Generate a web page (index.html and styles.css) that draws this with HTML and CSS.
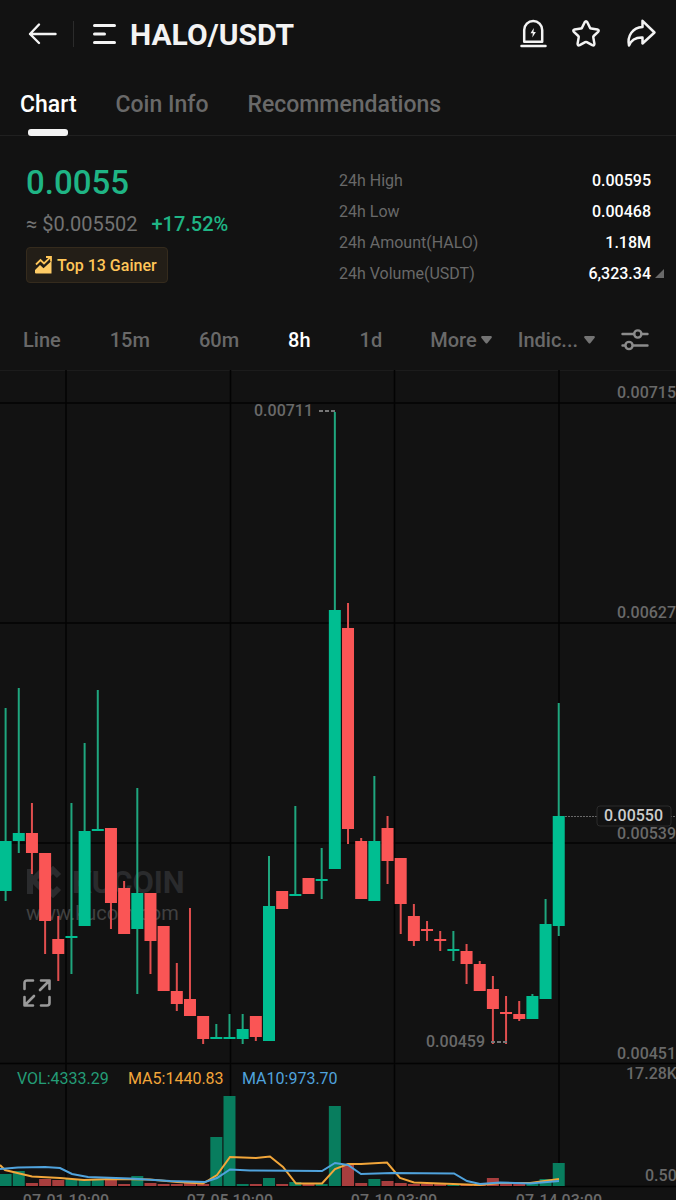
FILE: index.html
```html
<!DOCTYPE html>
<html lang="en">
<head>
<meta charset="utf-8">
<meta name="viewport" content="width=device-width, initial-scale=1">
<title>HALO/USDT</title>
<link rel="stylesheet" href="styles.css">
</head>
<body>
<div class="app">
  <header class="header">
    <button class="icon-button" aria-label="Back">
      <svg width="30" height="28" viewBox="0 0 30 28" fill="none" stroke="#f3f3f3" stroke-width="2.400" stroke-linecap="round" stroke-linejoin="round"><path d="M27.500 14H2M11 4.500 2 14l9 9"/></svg>
    </button>
    <span class="divider"></span>
    <button class="pair">
      <svg width="25" height="24" viewBox="0 0 25 24" stroke="#f3f3f3" stroke-width="3" stroke-linecap="round"><path d="M2.500 3.500h20M2.500 12h10M2.500 20.500h20"/></svg>
      <span class="pair-name">HALO/USDT</span>
    </button>
    <div class="actions">
      <button class="icon-button" aria-label="Price alert">
        <svg width="28" height="30" viewBox="0 0 28 30" fill="none" stroke="#f3f3f3" stroke-width="2.500" stroke-linejoin="round" stroke-linecap="round"><path d="M5.200 22.800V11a9 9 0 0 1 18 0v11.800z"/><path d="M2.500 27h24"/><path d="M14.800 9 11.500 14.300h2.300l-.5 4.200 3.600-5.500h-2.400z" fill="#f3f3f3" stroke="none"/></svg>
      </button>
      <button class="icon-button" aria-label="Add to favorites">
        <svg width="30" height="30" viewBox="0 0 30 30" fill="none" stroke="#f3f3f3" stroke-width="2.500" stroke-linejoin="round"><path d="M13.700 3.200Q15 1.100 16.300 3.200L19 8.800Q19.400 9.500 20.200 9.600L26.400 10.500Q28.600 11.100 27.100 12.800L22.700 17Q22.100 17.600 22.300 18.400L23.400 24.600Q23.500 27 21.300 26.200L15.800 23.200Q15 22.800 14.200 23.200L8.700 26.200Q6.500 27 6.600 24.600L7.700 18.400Q7.900 17.600 7.300 17L2.900 12.800Q1.400 11.100 3.600 10.500L9.800 9.600Q10.600 9.500 11 8.800Z"/></svg>
      </button>
      <button class="icon-button" aria-label="Share">
        <svg width="32" height="30" viewBox="0 0 32 30" fill="none" stroke="#f3f3f3" stroke-width="2.500" stroke-linejoin="round"><path d="M17.500 1.800 29.500 13.500 17.500 24.500V18.500C10 18.200 6 21.500 4 26.500 2 17 7.500 8.500 17.500 8Z"/></svg>
      </button>
    </div>
  </header>

  <nav class="tabs">
    <a class="tab tab-active" href="#chart">Chart</a>
    <a class="tab" href="#coin-info">Coin Info</a>
    <a class="tab" href="#recommendations">Recommendations</a>
  </nav>

  <section class="summary">
    <div class="quote">
      <div class="price">0.0055</div>
      <div class="quote-line"><span class="fiat">≈ $0.005502</span><span class="change">+17.52%</span></div>
      <a class="badge" href="#gainers">
        <svg width="18" height="18" viewBox="0 0 18 18"><path d="M0 16.500V14l5-5 3.500 3.200L16.500 5v12.500H1Q0 17.500 0 16.500z" fill="#ffcc66"/><path d="m1 8.500 4.500-4.500 3.500 3.500L15 1.700M11 1h5v4.500" fill="none" stroke="#ffc659" stroke-width="1.800"/></svg>
        Top 13 Gainer
      </a>
    </div>
    <dl class="stats">
      <div class="stat"><dt>24h High</dt><dd>0.00595</dd></div>
      <div class="stat"><dt>24h Low</dt><dd>0.00468</dd></div>
      <div class="stat"><dt>24h Amount(HALO)</dt><dd>1.18M</dd></div>
      <div class="stat stat-more"><dt>24h Volume(USDT)</dt><dd>6,323.34</dd></div>
    </dl>
  </section>

  <div class="toolbar">
    <div class="intervals">
      <button class="option">Line</button>
      <button class="option">15m</button>
      <button class="option">60m</button>
      <button class="option option-active" aria-pressed="true">8h</button>
      <button class="option">1d</button>
    </div>
    <div class="menus">
      <button class="option" aria-haspopup="menu">More<svg width="11" height="8" viewBox="0 0 11 8"><path d="M1 0h9q1.500.5.5 2L6.500 7q-1 1-2 0L.5 2Q-.5.5 1 0z" fill="#737373"/></svg></button>
      <button class="option option-indicator" aria-haspopup="menu">Indic...<svg width="11" height="8" viewBox="0 0 11 8"><path d="M1 0h9q1.500.5.5 2L6.500 7q-1 1-2 0L.5 2Q-.5.5 1 0z" fill="#737373"/></svg></button>
      <button class="icon-button" aria-label="Chart settings">
        <svg width="28" height="24" viewBox="0 0 28 24" fill="none" stroke="#8c8c8c" stroke-width="2.400" stroke-linecap="round"><path d="M1.500 6H13M20.500 6h6M1.500 17.500H4M12 17.500h14.500"/><circle cx="16.800" cy="6" r="3.600"/><circle cx="8" cy="17.500" r="3.600"/></svg>
      </button>
    </div>
  </div>

  <main class="chart">
    <svg class="plot" viewBox="0 370 676 830" preserveAspectRatio="xMaxYMin slice" role="img" aria-label="HALO/USDT 8h candles">
      <path class="frame" d="M0 370.500H676"/>
      <path class="grid" d="M0 403H676M0 623H676M0 843H676M0 1063.500H676M0 1186.500H676M66 370V1186M230.500 370V1186M394.500 370V1186M559 370V1186"/>
      <g class="watermark">
        <path d="M30 869V894M31 882 43 870M35 882 44 891M47 876 53 870 59 876M47 888 53 894 59 888M42 882h5" fill="none" stroke-width="6"/>
        <text class="brand" x="72" y="893">KUCOIN</text>
        <text class="site" x="26" y="920">www.kucoin.com</text>
      </g>
      <g id="candles"></g>
      <g id="volumes"></g>
      <polyline class="ma5" points="0,1165 5,1170 32,1176.500 60,1178 84,1180 110,1179 150,1179.500 177,1182 203,1183.500 217,1175 230,1157 256,1158 270,1156.500 283,1167 296,1183.500 322,1183.500 335,1169 348,1164 361,1164 387,1162.500 400,1178 414,1182.500 440,1183.500 480,1185 500,1183 530,1183 559,1179"/>
      <polyline class="ma10" points="0,1169 18,1167.500 45,1167 60,1168 72,1174 88,1177 130,1178.500 170,1181 205,1182 217,1178 230,1169.500 250,1170.500 322,1171 335,1163 348,1165 361,1174 392,1173 454,1173.500 467,1181 480,1184 500,1182.500 530,1183.500 559,1181"/>
      <path class="marker" d="M319 411h16M491 1042h16"/>
      <path class="last" d="M565 816.500H676"/>
      <rect class="last-box" x="597" y="806" width="74" height="20" rx="3"/>
      <text class="last-label" x="604" y="821">0.00550</text>
      <g class="axis">
        <text x="254" y="416">0.00711</text>
        <text x="426" y="1047">0.00459</text>
        <text x="617" y="398">0.00715</text>
        <text x="617" y="618">0.00627</text>
        <text x="617" y="839">0.00539</text>
        <text x="617" y="1059">0.00451</text>
        <text x="626" y="1079">17.28K</text>
        <text x="645" y="1181">0.50</text>
        <text x="66" y="1206" text-anchor="middle">07-01 19:00</text>
        <text x="230" y="1206" text-anchor="middle">07-05 19:00</text>
        <text x="394" y="1206" text-anchor="middle">07-10 03:00</text>
        <text x="559" y="1206" text-anchor="middle">07-14 03:00</text>
      </g>
      <g class="legend">
        <text class="legend-vol" x="17" y="1084">VOL:4333.29</text>
        <text class="legend-ma5" x="128" y="1084">MA5:1440.83</text>
        <text class="legend-ma10" x="242" y="1084">MA10:973.70</text>
      </g>
    </svg>
    <button class="icon-button fullscreen" aria-label="Full screen">
      <svg width="28" height="28" viewBox="0 0 28 28" fill="none" stroke="#9a9a9a" stroke-width="2.600" stroke-linecap="round" stroke-linejoin="round"><path d="M1.500 10V4q0-2.500 2.500-2.500h6M18 1.500h8.500V10M26 2l-9 9M1.500 18v8.500H10M2 26l9-9M26.500 18v6q0 2.500-2.500 2.500h-6"/></svg>
    </button>
  </main>
</div>
<script src="chart.js"></script>
</body>
</html>
```
FILE: styles.css
```css
* { box-sizing: border-box; }

body {
  margin: 0;
  background: #121212;
  color: #f3f3f3;
  font-family: Roboto, "Liberation Sans", sans-serif;
  font-size: 16px;
}

button {
  padding: 0;
  border: 0;
  background: none;
  color: inherit;
  font: inherit;
}

a { color: inherit; text-decoration: none; }
svg { display: block; }

.app {
  display: flex;
  flex-direction: column;
  height: 100vh;
  overflow: hidden;
}

.header {
  display: flex;
  align-items: center;
  height: 68px;
  padding: 0 19px 0 28px;
}

.divider {
  width: 1px;
  height: 26px;
  margin: 0 18px 0 15px;
  background: #2b2b2b;
}

.pair { display: flex; align-items: center; gap: 13px; }
.pair-name { padding-top: 2px; font-size: 30px; line-height: 40px; font-weight: 700; }
.actions { display: flex; align-items: center; gap: 24px; margin-left: auto; }

.tabs {
  display: flex;
  gap: 39px;
  height: 68px;
  padding: 0 20px;
  border-bottom: 1px solid #202020;
  color: #696969;
  font-size: 23px;
  line-height: 73px;
  font-weight: 500;
}

.tab { position: relative; height: 100%; }
.tab-active { color: #fff; }

.tab-active::after {
  content: "";
  position: absolute;
  bottom: -1px;
  left: calc(50% - 20px);
  width: 40px;
  height: 7px;
  border-radius: 3px;
  background: #f3f3f3;
}

.summary {
  display: flex;
  justify-content: space-between;
  padding: 29px 25px 0 26px;
}

.price {
  color: #1fb585;
  font-size: 33px;
  line-height: 36px;
  font-weight: 500;
}

.quote-line {
  display: flex;
  gap: 14px;
  margin: 8px 0;
  font-size: 20px;
  line-height: 30px;
}

.fiat { color: #737373; }
.change { color: #1fb585; font-weight: 500; }

.badge {
  display: inline-flex;
  align-items: center;
  gap: 4px;
  height: 36px;
  padding: 0 10px 0 8px;
  border: 1px solid #352b1d;
  border-radius: 4px;
  background: #231e17;
  color: #ffc659;
  font-size: 16px;
  font-weight: 500;
}

.stats { width: 50%; max-width: 312px; margin: 0; line-height: 31px; }
.stat { position: relative; display: flex; justify-content: space-between; }
.stat dt { color: #696969; }
.stat dd { margin: 0; color: #fff; font-weight: 500; }

.stat-more::after {
  content: "";
  position: absolute;
  right: -13px;
  bottom: 11px;
  border-bottom: 9px solid #696969;
  border-left: 9px solid transparent;
}

.toolbar {
  display: flex;
  justify-content: space-between;
  align-items: center;
  height: 60px;
  margin-top: 21px;
  padding: 0 27px 0 23px;
  color: #696969;
  font-size: 20px;
  font-weight: 500;
}

.intervals { display: flex; gap: 49px; }
.menus { display: flex; align-items: center; gap: 26px; }
.option { display: flex; align-items: center; gap: 4px; line-height: 30px; }
.option-indicator { gap: 6px; }
.option-active { color: #fff; }

.chart { position: relative; flex: 1; min-height: 0; }
.plot { width: 100%; height: 100%; }
.fullscreen { position: absolute; left: 23px; bottom: 193px; }

.frame { stroke: #1c1c1c; stroke-width: 1; }
.grid { fill: none; stroke: #030303; stroke-width: 1.5; }
.watermark { fill: #2a2b2d; stroke: #2a2b2d; }
.brand { stroke: none; font-size: 31px; font-weight: 700; }
.site { fill: #414141; stroke: none; font-size: 20px; }
.up { fill: #00be91; }
.down { fill: #fa5555; }
.wick-up { fill: #1fa67e; }
.wick-down { fill: #e04e4e; }
.volume-up { fill: #087d5e; }
.volume-down { fill: #a83e3e; }
.ma5, .ma10 { fill: none; stroke-width: 2; }
.ma5 { stroke: #f2a63a; }
.ma10 { stroke: #50a3dd; }
.marker { fill: none; stroke: #777; stroke-width: 2; stroke-dasharray: 4 2; }
.last { fill: none; stroke: #696969; stroke-width: 1; stroke-dasharray: 2 1; }
.last-box { fill: #121212; stroke: #2b2b2b; }
.last-label { fill: #ccc; font-size: 16px; font-weight: 500; }
.axis { fill: #696969; font-size: 16px; font-weight: 500; }
.legend { font-size: 16px; }
.legend-vol { fill: #249d77; }
.legend-ma5 { fill: #f2a63a; }
.legend-ma10 { fill: #50a3dd; }
```
FILE: chart.js
```js
// Each candle: rising (1) or falling (0), high, body top, body bottom, low, volume top.
const candles = [
  [1, 708, 841, 891, 901, 1174], [1, 688, 833, 841, 853, 1171],
  [0, 803, 833, 853, 874, 1183], [0, 853, 853, 921, 954, 1179],
  [0, 916, 939, 954, 981, 1180], [1, 803, 936, 938, 974, 1179],
  [1, 743, 831, 926, 926, 1180], [1, 690, 829, 831, 831, 1179],
  [0, 828, 828, 903, 929, 1178], [0, 881, 888, 934, 934, 1184],
  [1, 788, 893, 929, 994, 1176], [0, 893, 893, 941, 974, 1183],
  [0, 926, 926, 991, 991, 1184], [0, 963, 991, 1004, 1011, 1184],
  [0, 908, 999, 1016, 1016, 1183], [0, 1016, 1016, 1039, 1044, 1184],
  [1, 1024, 1037, 1039, 1039, 1137], [1, 1014, 1037, 1039, 1039, 1096],
  [1, 1014, 1029, 1039, 1044, 1184], [0, 1016, 1016, 1037, 1041, 1184],
  [1, 856, 906, 1041, 1041, 1178], [0, 891, 891, 909, 909, 1184],
  [1, 806, 894, 896, 896, 1182], [0, 878, 878, 894, 894, 1183],
  [1, 848, 879, 881, 899, 1184], [1, 412, 610, 869, 869, 1106],
  [0, 603, 628, 829, 844, 1164], [0, 838, 841, 899, 899, 1183],
  [1, 776, 841, 901, 901, 1179], [0, 816, 828, 861, 884, 1181],
  [0, 858, 858, 904, 934, 1183], [0, 904, 916, 941, 946, 1184],
  [0, 921, 929, 931, 941, 1184], [0, 931, 939, 941, 951, 1184],
  [1, 931, 949, 951, 961, 1185], [0, 944, 951, 964, 984, 1185],
  [0, 961, 964, 991, 991, 1185], [0, 976, 989, 1009, 1044, 1178],
  [0, 996, 1012, 1014, 1044, 1184], [0, 1001, 1014, 1019, 1021, 1184],
  [1, 994, 996, 1019, 1019, 1184], [1, 899, 924, 999, 999, 1179],
  [1, 703, 816, 926, 936, 1163]
];

const first = 5.6;
const pitch = 13.17;
const base = 1186;

function bar(parent, name, x, top, width, bottom) {
  const rect = document.createElementNS("http://www.w3.org/2000/svg", "rect");
  rect.setAttribute("class", name);
  rect.setAttribute("x", x);
  rect.setAttribute("y", top);
  rect.setAttribute("width", width);
  rect.setAttribute("height", bottom - top);
  parent.append(rect);
}

const candleLayer = document.getElementById("candles");
const volumeLayer = document.getElementById("volumes");

candles.forEach(([rising, high, top, bottom, low, volume], i) => {
  const x = first + pitch * i;
  const kind = rising ? "up" : "down";
  bar(candleLayer, "wick-" + kind, x - 1, high, 2, low);
  bar(candleLayer, kind, x - 6, top, 12, bottom);
  bar(volumeLayer, "volume-" + kind, x - 6, volume, 12, base);
});
```
